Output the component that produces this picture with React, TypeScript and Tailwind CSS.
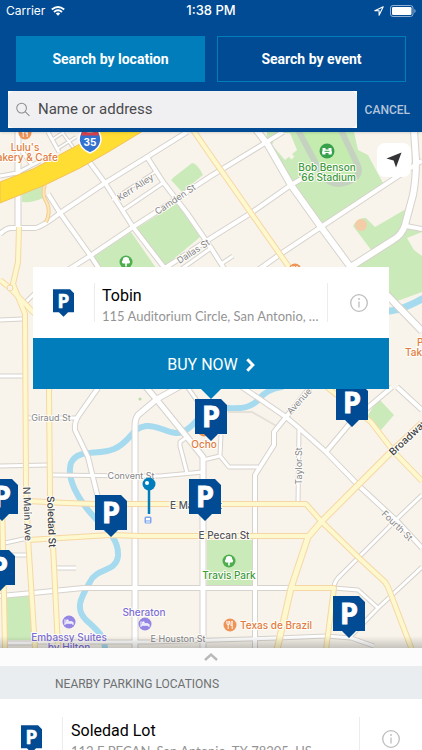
import { useState } from 'react';

interface Road { d: string; w: number; kind?: 'major' | 'minor' }
interface Label { text: string; x: number; y: number; rotate?: number; tone: keyof typeof TONE; anchor?: 'start' | 'middle' }
interface Lot { name: string; address: string }

const TONE = {
    street: 'fill-[#85858a] text-[9px]',
    main:   'fill-[#55565a] text-[10px] font-medium',
    bold:   'fill-[#3d3e42] text-[10px] font-medium',
    food:   'fill-[#e07c43] text-[10px] font-medium',
    hotel:  'fill-[#7e6fd6] text-[10px] font-medium',
    park:   'fill-[#3c9a41] text-[10px] font-medium',
};

const PARKS = [
    'M22 194L46 184L43 198Q33 203 22 202Z',
    'M171 180L174 177L192 163Q197 163 203 175L182 192Z',
    'M177 203L200 237L163 268L137 228Z',
    'M131 232L156 268H98L93 257Z',
    'M267 132H354L358 150L368 155L383 183L323 225L293 184L266 143Z',
    'M353 226Q358 217 366 218L375 227L406 209L400 235L372 251Z',
    'M349 269L400 238L409 228H422V292L392 303L352 268Z',
    'M378 398L394 415L381 430L367 417Z',
    'M207 540H252V586H207Z',
    'M7 597L30 595L32 640H5Z',
];

const ROADS: Road[] = [
    { d: 'M88 160L105 183L133 227L166 270', w: 4 },
    { d: 'M48 194L60 213L90 255L100 270', w: 4 },
    { d: 'M68 270L90 256L133 227L167 205L211 176L283 132', w: 4 },
    { d: 'M0 234Q6 228 12 228H35Q42 227 60 213L105 183L147 157L187 132', w: 4 },
    { d: 'M147 157L163 182L187 213L211 248L225 270', w: 4 },
    { d: 'M115 198L155 172', w: 2 },
    { d: 'M118 197L112 200', w: 2 },
    { d: 'M123 210L163 183', w: 3 },
    { d: 'M165 268L211 238L251 213L291 185L303 178', w: 4 },
    { d: 'M258 270L279 255L321 227L418 163L422 161', w: 4 },
    { d: 'M221 264L233 256', w: 3 },
    { d: 'M211 248L180 270', w: 3 },
    { d: 'M255 128L268 145L291 185L321 227L349 265L388 296L422 331', w: 6 },
    { d: 'M414 130L416 160Q416 180 413 195L405 225Q402 235 393 240L349 268', w: 6 },
    { d: 'M406 226L422 229', w: 4 },
    { d: 'M18 130V228', w: 5 },
    { d: 'M0 176L17 173L40 161', w: 3 },
    { d: 'M48 132L59 152', w: 3 },
    { d: 'M57 149L76 137M62 132L75 150M53 139L64 132', w: 2 },
    { d: 'M18 146L32 165', w: 3 },
    { d: 'M0 320L22 319M0 376H24M26 302L36 292', w: 3 },
    { d: 'M0 466L48 465', w: 3 },
    { d: 'M53 475L133 476H160L203 472', w: 3 },
    { d: 'M27 418H77', w: 3 },
    { d: 'M98 388L79 415Q74 422 75 430L88 457L98 498', w: 4 },
    { d: 'M184 384L157 399L138 415Q135 419 135 426V648', w: 5 },
    { d: 'M146 387L157 400L187 437L203 457V648', w: 5 },
    { d: 'M186 385L200 405', w: 3 },
    { d: 'M187 437L180 442V446L187 473', w: 3 },
    { d: 'M203 460L220 456L221 435M220 456L229 467H258', w: 3 },
    { d: 'M242 387L286 417L299 428L326 452L358 485L398 522L422 548', w: 4 },
    { d: 'M310 388L286 417L274 432V445L255 475V648', w: 4 },
    { d: 'M299 428L298 504', w: 3 },
    { d: 'M326 452L351 422L392 387M397 387L422 410', w: 4 },
    { d: 'M334 588Q334 581 341 575L401 515L422 495', w: 3 },
    { d: 'M334 588L358 590L378 608M349 638L378 608L422 567', w: 3 },
    { d: 'M0 596L33 593L83 588H291', w: 4 },
    { d: 'M33 642H150L278 638L326 636L351 638L374 646', w: 3 },
    { d: 'M56 568H76M12 555H28M0 544L28 538', w: 3 },
    { d: 'M5 643H33', w: 3 },
    { d: 'M193 130L211 156L251 213L291 270L328 388L371 422L394 452L422 481', w: 4, kind: 'major' },
    { d: 'M19 227L18 262L13 284L25 314L26 488L28 538L35 648', w: 4, kind: 'major' },
    { d: 'M0 280L10 288L33 312Q49 325 49 345V390L50 495L53 545L58 648', w: 4, kind: 'major' },
    { d: 'M28 501Q60 503 95 504H306L321 521L358 557L385 582Q388 586 390 592L412 650', w: 4, kind: 'major' },
    { d: 'M28 540L110 535L140 536H308', w: 4, kind: 'major' },
    { d: 'M422 423L391 452L358 485L321 522L308 537L291 588L277 650', w: 5, kind: 'major' },
    { d: 'M291 588H334L326 650', w: 4, kind: 'major' },
    { d: 'M2 500L5 648', w: 4, kind: 'major' },
];

const LABELS: Label[] = [
    { text: 'Kerr Alley', x: 137, y: 190, rotate: -33, tone: 'street' },
    { text: 'Camden St', x: 177, y: 202, rotate: -34, tone: 'street' },
    { text: 'Dallas St', x: 195, y: 254, rotate: -33, tone: 'street' },
    { text: 'Avenue B', x: 291, y: 415, rotate: -48, tone: 'street', anchor: 'start' },
    { text: 'Giraud St', x: 51, y: 421, tone: 'street' },
    { text: 'Convent St', x: 131, y: 479, tone: 'street' },
    { text: 'Taylor St', x: 302, y: 466, rotate: -90, tone: 'street' },
    { text: 'Fourth St', x: 395, y: 528, rotate: 44, tone: 'street' },
    { text: 'E Houston St', x: 178, y: 642, tone: 'street' },
    { text: 'N Main Ave', x: 24, y: 514, rotate: 88, tone: 'main' },
    { text: 'E Martin St', x: 170, y: 509, tone: 'main', anchor: 'start' },
    { text: 'E Pecan St', x: 224, y: 539, tone: 'main' },
    { text: 'Soledad St', x: 48, y: 522, rotate: 88, tone: 'bold' },
    { text: 'Broadway', x: 393, y: 456, rotate: -43, tone: 'bold', anchor: 'start' },
    { text: "Lulu's", x: 25, y: 151, tone: 'food' },
    { text: 'Bakery & Cafe', x: 24, y: 161, tone: 'food' },
    { text: 'Pizza', x: 417, y: 346, tone: 'food', anchor: 'start' },
    { text: 'Take', x: 405, y: 356, tone: 'food', anchor: 'start' },
    { text: 'Ocho', x: 204, y: 448, tone: 'food' },
    { text: 'Texas de Brazil', x: 240, y: 629, tone: 'food', anchor: 'start' },
    { text: 'Sheraton', x: 144, y: 616, tone: 'hotel' },
    { text: 'Embassy Suites', x: 69, y: 641, tone: 'hotel' },
    { text: 'by Hilton', x: 69, y: 651, tone: 'hotel' },
    { text: 'Bob Benson', x: 327, y: 171, tone: 'park' },
    { text: "'66 Stadium", x: 327, y: 181, tone: 'park' },
    { text: 'Travis Park', x: 229, y: 579, tone: 'park' },
];

const PINS = [
    { x: 336, y: 385 }, { x: 195, y: 399 }, { x: 189, y: 479 }, { x: 95, y: 495 },
    { x: -14, y: 479 }, { x: -17, y: 550 }, { x: 333, y: 596 },
];

const SELECTED: Lot = { name: 'Tobin', address: '115 Auditorium Circle, San Antonio, TX 78205, US' };
const NEARBY: Lot[] = [{ name: 'Soledad Lot', address: '112 E PECAN, San Antonio, TX 78205, US' }];

function PinShape() {
    return (
        <>
            <path d="M0 0H26L32 6V35H23L16 42L9 35H0Z" fill="#004b93"/>
            <text x="16" y="28" textAnchor="middle" stroke="#fff" strokeWidth="0.8" className="fill-white font-['Noto_Sans',sans-serif] text-[29px] font-bold">P</text>
        </>
    );
}

function ParkingIcon() {
    return (
        <svg className="w-[21px] h-7 flex-shrink-0" viewBox="0 0 32 42" aria-hidden="true"><PinShape/></svg>
    );
}

function InfoIcon() {
    return (
        <svg className="w-5 h-5" viewBox="0 0 20 20" fill="none" stroke="#bdbdbd" aria-hidden="true">
            <circle cx="10" cy="10" r="8.3" strokeWidth="1.3"/>
            <path d="M10 8.5V14.5" strokeWidth="1.3"/>
            <circle cx="10" cy="6" r="0.9" fill="#bdbdbd" stroke="none"/>
        </svg>
    );
}

function TreeBadge({ x, y }: { x: number; y: number }) {
    return (
        <g transform={`translate(${x} ${y})`}>
            <circle r="6.5" fill="#4cae4c"/>
            <path d="M-0.8 4.5V1.6H-2.6A1.8 1.8 0 0 1 -3.2 -1.7A3.2 3.2 0 0 1 3.2 -1.7A1.8 1.8 0 0 1 2.6 1.6H0.8V4.5Z" fill="#fff"/>
        </g>
    );
}

function HotelBadge({ x, y }: { x: number; y: number }) {
    return (
        <g transform={`translate(${x} ${y})`}>
            <circle r="6.5" fill="#9585e4"/>
            <path d="M-4 -2.6V3M-4 1.2H4M4 3V0.2" stroke="#fff" strokeWidth="1"/>
            <path d="M-3 0.8V-0.8H2.6Q4 -0.6 4 0.8Z" fill="#fff"/>
            <rect x="-2.8" y="-2.4" width="2.4" height="1.4" rx="0.6" fill="#fff"/>
        </g>
    );
}

function FoodBadge({ x, y }: { x: number; y: number }) {
    return (
        <g transform={`translate(${x} ${y})`}>
            <circle r="6.5" fill="#ee9457"/>
            <path d="M-1.8 -4V4M-3.2 -4V-1.4Q-3.2 -0.4 -1.8 -0.4Q-0.4 -0.4 -0.4 -1.4V-4M2.2 4V-4Q0.8 -3 0.9 0.4H2.2" fill="none" stroke="#fff" strokeWidth="0.9"/>
        </g>
    );
}

function CityMap() {
    const minor = ROADS.filter(r => r.kind !== 'major');
    const major = ROADS.filter(r => r.kind === 'major');
    return (
        <svg className="absolute inset-0 w-full h-full" viewBox="0 132 422 516" preserveAspectRatio="xMidYMin slice" role="img" aria-label="Map of downtown San Antonio">
            <rect x="0" y="132" width="422" height="516" fill="#f8f4ec"/>
            {PARKS.map(d => <path key={d} d={d} fill="#cbeaba"/>)}
            <path d="M407 238L422 232V256L414 250Z" fill="#f8f4ec"/>
            <path d="M277 133H290L297 150L285 160L272 145Z" fill="#f8f4ec"/>
            <path d="M287 152L293 158" stroke="#f8f4ec" strokeWidth="4"/>
            <circle cx="361" cy="225" r="6" fill="#f4cda8"/>

            {/* Running track */}
            <path d="M297 128L322 175Q332 188 348 182Q362 176 358 166L340 128" fill="#c3ecae" stroke="#c5d2bf" strokeWidth="6"/>

            {/* River */}
            <g fill="none" stroke="#a6daee" strokeLinecap="round" strokeLinejoin="round">
                <path d="M205 410Q188 434 176 433C164 432 158 425 146 426C131 428 131 442 114 449C98 456 78 448 71 463C66 478 78 500 95 518C108 530 119 540 118 556C116 573 97 567 90 582C82 596 74 608 86 620C97 630 105 636 105 650" strokeWidth="6"/>
                <path d="M205 410L228 408Q250 410 259 399Q267 389 282 387" strokeWidth="6"/>
                <path d="M385 311Q398 312 422 299" strokeWidth="7"/>
            </g>
            <path d="M228 412L252 412L280 428M262 402L284 414" fill="none" stroke="#e5e0d8" strokeWidth="2"/>

            <g fill="none" strokeLinejoin="round">
                {minor.map(r => <path key={r.d} d={r.d} stroke="#d6d2cc" strokeWidth={r.w + 2}/>)}
                {minor.map(r => <path key={r.d} d={r.d} stroke="#ffffff" strokeWidth={r.w}/>)}
                {major.map(r => <path key={r.d} d={r.d} stroke="#f6d7a4" strokeWidth={r.w + 2}/>)}
                {major.map(r => <path key={r.d} d={r.d} stroke="#fdf8cd" strokeWidth={r.w}/>)}
                <circle cx="10" cy="288" r="3" fill="#f8f4ec" stroke="#f6d7a4"/>
                <path d="M45 185Q41 194 47 203Q51 212 46 222" stroke="#f5cb8a" strokeWidth="4"/>
                <path d="M45 185Q41 194 47 203Q51 212 46 222" stroke="#fbe7bd" strokeWidth="2"/>
            </g>

            {/* Interstate */}
            <path d="M0 182L33 169L78 145L101 131H143L110 151L80 168L45 185L0 203Z" fill="#ffdd33" stroke="#f3c25c"/>
            <g transform="translate(90 141)">
                <path d="M-8 -11Q0 -7 8 -11Q11 -6 11 -1Q10 8 0 12Q-10 8 -11 -1Q-11 -6 -8 -11Z" fill="#3271cf" stroke="#fff" strokeWidth="1.5"/>
                <path d="M-7.5 -10Q0 -7 7.5 -10L9 -5.5H-9Z" fill="#d8434d"/>
                <text y="5" textAnchor="middle" className="fill-white font-[Inter,sans-serif] text-[10px] font-bold">35</text>
            </g>

            <TreeBadge x={126} y={262}/>
            <TreeBadge x={229} y={561}/>
            <HotelBadge x={69} y={622}/>
            <HotelBadge x={145} y={624}/>
            <FoodBadge x={25} y={133}/>
            <FoodBadge x={230} y={625}/>
            <FoodBadge x={295} y={270}/>
            <FoodBadge x={204} y={430}/>
            <g transform="translate(327 151)">
                <circle r="7.5" fill="#37a24b"/>
                <path d="M-4.5 -3H-1.5V-1.5H1.5V-3H4.5V-0.5Q5.5 1 4.5 3.5H1.5V2H-1.5V3.5H-4.5Q-5.5 1 -4.5 -0.5Z" fill="#fff"/>
                <path d="M-2.5 0.3H2.5" stroke="#37a24b"/>
            </g>
            <g transform="translate(148 520)">
                <rect x="-3.5" y="-3.5" width="7" height="7" rx="1.5" fill="#7fa5ee"/>
                <rect x="-2" y="-2" width="4" height="2.4" fill="#fff"/>
                <path d="M-2 2H2" stroke="#fff"/>
            </g>
            <circle cx="140" cy="399" r="1.5" fill="#b8dba6"/>

            {LABELS.map(l => (
                <text key={l.text} textAnchor={l.anchor ?? 'middle'} transform={`translate(${l.x} ${l.y}) rotate(${l.rotate ?? 0})`} stroke="#fffdf8" strokeWidth="2" strokeLinejoin="round" className={`font-[Inter,sans-serif] [paint-order:stroke] ${TONE[l.tone]}`}>
                    {l.text}
                </text>
            ))}

            {/* Searched point */}
            <path d="M149 484V514" stroke="#007dba" strokeWidth="2.5"/>
            <circle cx="149" cy="484" r="6.5" fill="#007dba"/>
            <circle cx="147" cy="483" r="2" fill="#fff"/>

            <path d="M199 387H223L211 399Z" fill="#007dba"/>
            {PINS.map(p => <g key={`${p.x}-${p.y}`} transform={`translate(${p.x} ${p.y})`}><PinShape/></g>)}
        </svg>
    );
}

function StatusBar() {
    return (
        <div className="grid grid-cols-3 items-center h-[22px] px-1.5 font-[Inter,sans-serif] text-xs text-white">
            <div className="flex items-center gap-1.5">
                <span>Carrier</span>
                <svg className="w-[14px] h-[10px]" viewBox="0 0 14 10" fill="none" stroke="#fff" strokeWidth="1.9" aria-hidden="true">
                    <path d="M0.8 3.6Q7 -1.6 13.2 3.6M3 6Q7 2.6 11 6"/>
                    <path d="M4.8 7.4Q7 5.7 9.2 7.4L7 9.8Z" fill="#fff" stroke="none"/>
                </svg>
            </div>
            <span className="text-center text-[13px] font-medium">1:38 PM</span>
            <div className="flex items-center justify-end gap-1.5">
                <svg className="w-[10px] h-[10px]" viewBox="0 0 10 10" fill="none" stroke="#fff" strokeWidth="1.1" strokeLinejoin="round" aria-hidden="true">
                    <path d="M9.2 0.8L0.8 4.8H5.1V9.2Z"/>
                </svg>
                <svg className="w-[26px] h-[12px]" viewBox="0 0 26 12" aria-hidden="true">
                    <rect x="0.5" y="0.5" width="22.5" height="11" rx="2.5" fill="none" stroke="#8fb0d3"/>
                    <rect x="2" y="2" width="19.5" height="8" rx="1.2" fill="#fff"/>
                    <path d="M24.3 4Q25.6 4.6 25.6 6Q25.6 7.4 24.3 8Z" fill="#8fb0d3"/>
                </svg>
            </div>
        </div>
    );
}

export default function App() {
    const [mode, setMode] = useState<'location' | 'event'>('location');
    const tab = (active: boolean) =>
        `h-[46px] flex-1 border border-[#007dba] text-sm font-bold text-white ${active ? 'bg-[#007dba]' : ''}`;

    return (
        <div className="h-screen flex flex-col overflow-hidden bg-white font-[Roboto,sans-serif]">
            <header className="relative z-10 flex-shrink-0 bg-[#004b93] pb-1 shadow-sm">
                <StatusBar/>
                <div className="flex gap-3 px-4 pt-[14px]">
                    <button type="button" className={tab(mode === 'location')} onClick={() => setMode('location')}>Search by location</button>
                    <button type="button" className={tab(mode === 'event')} onClick={() => setMode('event')}>Search by event</button>
                </div>
                <div className="flex items-center pl-2 pr-3 pt-[9px]">
                    <label className="flex-1 bg-white">
                        <span className="flex items-center gap-2 h-[37px] px-2 rounded-md bg-[#f0f0f3]">
                            <svg className="w-[15px] h-[15px]" viewBox="0 0 15 15" fill="none" stroke="#8b8b90" strokeWidth="1.1" aria-hidden="true">
                                <circle cx="6" cy="6" r="5.2"/>
                                <path d="M9.8 9.8L14.4 14.4"/>
                            </svg>
                            <input aria-label="Name or address" placeholder="Name or address" className="w-full min-w-0 bg-transparent text-[15px] text-[#444] placeholder:text-[#4a4a4c] focus:outline-none"/>
                        </span>
                    </label>
                    <button type="button" className="pl-2 text-xs font-medium text-[#b4c4da]">CANCEL</button>
                </div>
            </header>

            <main className="relative flex-1 min-h-0">
                <CityMap/>
                <div className="absolute inset-x-0 bottom-0 h-3 bg-gradient-to-t from-black/20 to-transparent"/>
                <button type="button" aria-label="Show my position" className="absolute right-[11px] top-[11px] flex items-center justify-center w-[34px] h-[34px] rounded-lg bg-white">
                    <svg className="w-4 h-4" viewBox="0 0 16 16" fill="#333436" aria-hidden="true"><path d="M15.5 0.5L10 15.5L7.6 8.4L0.5 6.5Z"/></svg>
                </button>

                {/* Selected lot */}
                <section className="absolute inset-x-[33px] top-[135px]">
                    <div className="flex items-center h-[71px] bg-white">
                        <div className="flex justify-center w-[61px]"><ParkingIcon/></div>
                        <div className="flex flex-1 min-w-0 flex-col justify-center h-[39px] border-x border-[#ececec] pl-[7px] pr-2 pt-1.5">
                            <h2 className="flex-shrink-0 text-base leading-[21px] text-black">{SELECTED.name}</h2>
                            <p className="flex-shrink-0 truncate font-[Lato,sans-serif] text-[13px] leading-[21px] text-[#949494]">{SELECTED.address}</p>
                        </div>
                        <button type="button" aria-label="Details for Tobin" className="flex justify-center w-[61px]"><InfoIcon/></button>
                    </div>
                    <button type="button" className="flex items-center justify-center gap-2 w-full h-[51px] pt-0.5 bg-[#007dba] text-base text-white">
                        BUY NOW
                        <svg className="w-[9px] h-[14px]" viewBox="0 0 9 14" fill="none" stroke="#fff" strokeWidth="3" aria-hidden="true"><path d="M1.3 1.3L6.8 7L1.3 12.7"/></svg>
                    </button>
                </section>
            </main>

            <section className="flex-shrink-0 h-[102px] overflow-hidden">
                <button type="button" aria-label="Expand list" className="flex items-center justify-center w-full h-[18px] bg-[#fcfcfc]">
                    <svg className="w-[14px] h-2" viewBox="0 0 14 8" fill="none" stroke="#b9b9b9" strokeWidth="2.4" aria-hidden="true"><path d="M1 7L7 1.6L13 7"/></svg>
                </button>
                <h3 className="h-[33px] pl-[55px] pt-1 bg-[#e9edef] text-xs leading-7 text-[#6e7072]">NEARBY PARKING LOCATIONS</h3>
                <ul>
                    {NEARBY.map(lot => (
                        <li key={lot.name} className="flex items-center h-20 bg-white">
                            <div className="flex justify-center w-[62px]"><ParkingIcon/></div>
                            <div className="flex flex-1 min-w-0 flex-col justify-center h-11 border-x border-[#ececec] pl-2 pr-2 pt-1">
                                <h4 className="flex-shrink-0 text-base leading-[21px] text-black">{lot.name}</h4>
                                <p className="flex-shrink-0 truncate font-[Lato,sans-serif] text-[13px] leading-[21px] text-[#949494]">{lot.address}</p>
                            </div>
                            <button type="button" aria-label="Details for Soledad Lot" className="flex justify-center w-[62px]"><InfoIcon/></button>
                        </li>
                    ))}
                </ul>
            </section>
        </div>
    );
}
